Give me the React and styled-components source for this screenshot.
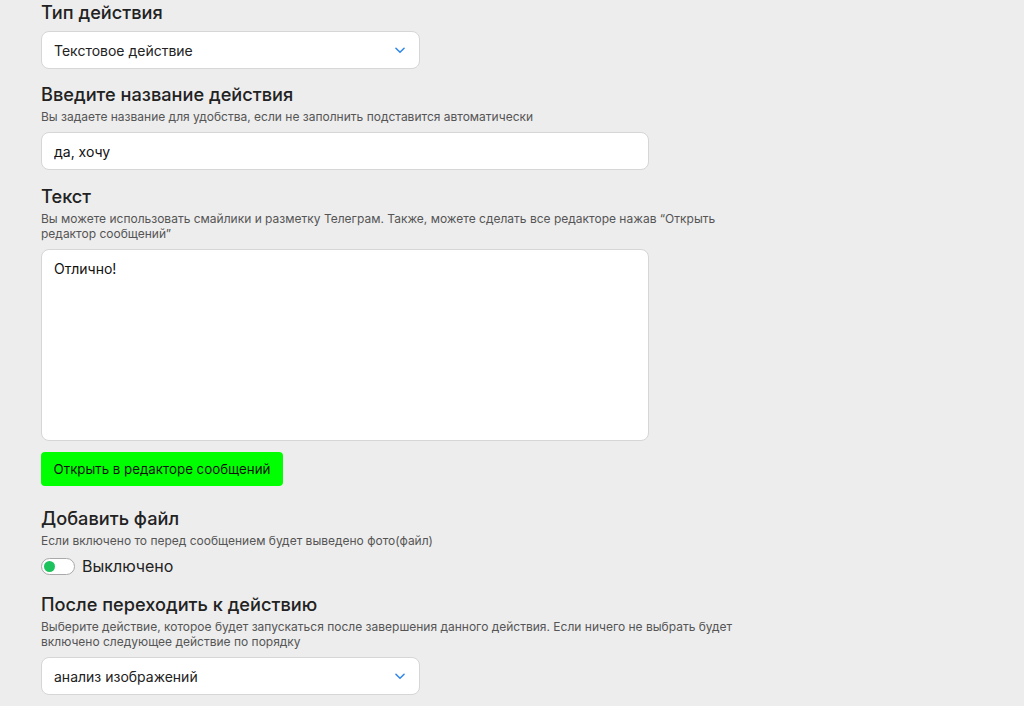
import React, { useState } from 'react';
import styled, { createGlobalStyle } from 'styled-components';

const GlobalStyle = createGlobalStyle`
  html, body {
    margin: 0;
    padding: 0;
    background: #ededed;
    font-family: Inter, "Noto Sans", sans-serif;
    color: #222;
  }
`;

const Page = styled.div`
  padding: 0 0 20px 41px;
  width: 740px;
  display: flex;
  flex-direction: column;
`;

const Section = styled.div`
  display: flex;
  flex-direction: column;
  margin-bottom: ${p => p.$space || 13}px;
`;

const Heading = styled.div`
  font-size: 18.2px;
  font-weight: 450;
  line-height: 24px;
  color: #222;
  margin-bottom: ${p => (p.$hasDesc ? 3 : 7)}px;
`;

const Desc = styled.div`
  font-size: 12px;
  line-height: 15px;
  color: #555;
  margin-bottom: 8px;
  max-width: 700px;
`;

const SelectBox = styled.div`
  box-sizing: border-box;
  width: 379px;
  height: 38px;
  background: #fff;
  border: 1px solid #d6d6d6;
  border-radius: 8px;
  display: flex;
  align-items: center;
  justify-content: space-between;
  padding: 0 12px 0 12px;
  font-size: 14px;
  color: #222;
`;

const Input = styled.input`
  box-sizing: border-box;
  width: 608px;
  height: 38px;
  background: #fff;
  border: 1px solid #d6d6d6;
  border-radius: 8px;
  padding: 0 12px;
  font-family: inherit;
  font-size: 14px;
  color: #111;
  outline: none;
`;

const TextArea = styled.textarea`
  box-sizing: border-box;
  width: 608px;
  height: 192px;
  background: #fff;
  border: 1px solid #d6d6d6;
  border-radius: 8px;
  padding: 10px 12px;
  font-family: inherit;
  font-size: 14px;
  line-height: 18px;
  color: #111;
  resize: none;
  outline: none;
`;

const GreenButton = styled.button`
  align-self: flex-start;
  margin-top: 11px;
  height: 34px;
  width: 242px;
  padding: 0;
  white-space: nowrap;
  text-align: center;
  background: #00ff00;
  border: none;
  border-radius: 4px;
  font-family: inherit;
  font-size: 13.3px;
  color: #111;
  cursor: pointer;
`;

const ToggleRow = styled.label`
  display: flex;
  align-items: center;
  gap: 7px;
  font-size: 16px;
  color: #222;
  cursor: pointer;
`;

const Track = styled.span`
  box-sizing: border-box;
  width: 34px;
  height: 17px;
  border: 1px solid #a9a9a9;
  border-radius: 9px;
  background: #fff;
  display: flex;
  align-items: center;
  padding: 0 2px;
  justify-content: ${p => (p.$on ? 'flex-end' : 'flex-start')};
`;

const Knob = styled.span`
  width: 11px;
  height: 11px;
  border-radius: 50%;
  background: #1cc35c;
`;

const Chevron = () => (
  <svg width="14" height="14" viewBox="0 0 24 24" fill="none" stroke="#2f86eb" strokeWidth="2.6" strokeLinecap="round" strokeLinejoin="round">
    <path d="M5 9l7 7 7-7" />
  </svg>
);

export default function App() {
  const [name, setName] = useState('да, хочу');
  const [text, setText] = useState('Отлично!');
  const [fileOn, setFileOn] = useState(false);

  return (
    <>
      <GlobalStyle />
      <Page>
        <Section>
          <Heading>Тип действия</Heading>
          <SelectBox>
            <span>Текстовое действие</span>
            <Chevron />
          </SelectBox>
        </Section>

        <Section $space={14}>
          <Heading $hasDesc>Введите название действия</Heading>
          <Desc>Вы задаете название для удобства, если не заполнить подставится автоматически</Desc>
          <Input value={name} onChange={e => setName(e.target.value)} />
        </Section>

        <Section $space={20}>
          <Heading $hasDesc>Текст</Heading>
          <Desc>Вы можете использовать смайлики и разметку Телеграм. Также, можете сделать все редакторе нажав “Открыть редактор сообщений”</Desc>
          <TextArea value={text} onChange={e => setText(e.target.value)} />
          <GreenButton>Открыть в редакторе сообщений</GreenButton>
        </Section>

        <Section $space={16}>
          <Heading $hasDesc>Добавить файл</Heading>
          <Desc>Если включено то перед сообщением будет выведено фото(файл)</Desc>
          <ToggleRow onClick={() => setFileOn(v => !v)}>
            <Track $on={fileOn}><Knob /></Track>
            <span>{fileOn ? 'Включено' : 'Выключено'}</span>
          </ToggleRow>
        </Section>

        <Section>
          <Heading $hasDesc>После переходить к действию</Heading>
          <Desc>Выберите действие, которое будет запускаться после завершения данного действия. Если ничего не выбрать будет включено следующее действие по порядку</Desc>
          <SelectBox>
            <span>анализ изображений</span>
            <Chevron />
          </SelectBox>
        </Section>
      </Page>
    </>
  );
}
